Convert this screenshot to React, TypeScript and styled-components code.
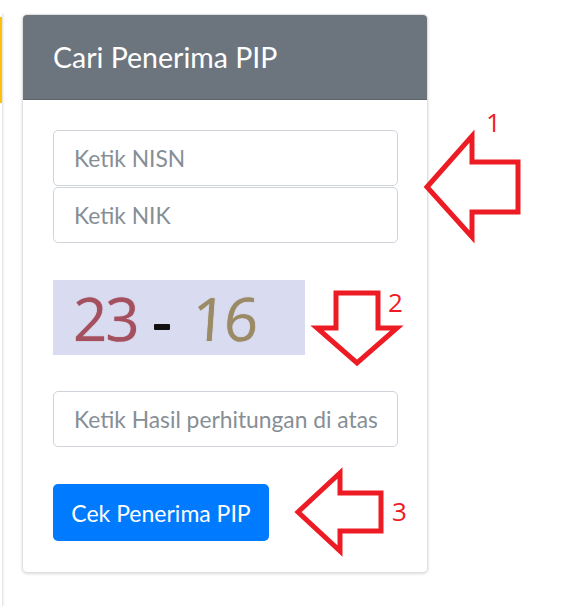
import React from 'react';
import styled, { createGlobalStyle } from 'styled-components';

const GlobalStyle = createGlobalStyle`
  html, body {
    margin: 0;
    padding: 0;
    background: #fff;
  }
  body {
    font-family: Lato, "Open Sans", sans-serif;
    width: 573px;
    height: 606px;
    overflow: hidden;
  }
`;

const Page = styled.div`
  position: relative;
  display: flex;
  align-items: flex-start;
  padding-top: 14px;
  height: 592px;
`;

const SideStub = styled.div`
  width: 2px;
  height: 620px;
  display: flex;
  flex-direction: column;
  border-right: 1px solid #e6e6e6;
  box-shadow: 1px 0 2px rgba(0, 0, 0, 0.06);
`;

const StubHeader = styled.div`
  height: 86px;
  margin-top: 3px;
  background: #ffc107;
`;

const Card = styled.div`
  margin-left: 19px;
  width: 406px;
  box-sizing: border-box;
  border: 1px solid rgba(0, 0, 0, 0.12);
  border-radius: 5px;
  box-shadow: 0 1px 3px rgba(0, 0, 0, 0.14);
  overflow: hidden;
`;

const CardHeader = styled.div`
  height: 85px;
  box-sizing: border-box;
  display: flex;
  align-items: center;
  padding: 0 30px;
  background: #6c757d;
  border-bottom: 1px solid rgba(0, 0, 0, 0.12);
`;

const Title = styled.h4`
  margin: 0;
  color: #fff;
  font-weight: 400;
  font-size: 28.5px;
`;

const CardBody = styled.div`
  padding: 30px 29px 31px 30px;
  display: flex;
  flex-direction: column;
  align-items: flex-start;
`;

const Input = styled.input<{ $gap?: number }>`
  width: 345px;
  height: 56px;
  box-sizing: border-box;
  margin: 0 0 ${(p) => p.$gap ?? 0}px 0;
  padding: 0 20px;
  border: 1px solid #ced4da;
  border-radius: 5px;
  font-family: inherit;
  font-size: 22.8px;
  color: #495057;
  background: #fff;
  outline: none;

  &::placeholder {
    color: #868e96;
  }
`;

const Captcha = styled.div`
  width: 252px;
  height: 75px;
  margin-bottom: 36px;
  box-sizing: border-box;
  padding-left: 20px;
  display: flex;
  align-items: center;
  background: #d9dcf0;
  font-family: "Open Sans", sans-serif;
  font-size: 60px;
  line-height: 1;
`;

const Digits = styled.span<{ $color: string; $skew?: number }>`
  color: ${(p) => p.$color};
  display: inline-block;
  transform: skewX(${(p) => p.$skew ?? 0}deg);
  text-shadow: 0 0 1px ${(p) => p.$color};
  letter-spacing: -2px;
`;

const Minus = styled.span`
  display: inline-block;
  width: 16px;
  height: 6px;
  margin: 18px 22px 0 16px;
  background: #111;
  border-radius: 1px;
`;

const Button = styled.button`
  width: 216px;
  height: 57px;
  border: none;
  border-radius: 5px;
  background: #007bff;
  color: #fff;
  font-family: inherit;
  font-size: 23px;
  cursor: pointer;
`;

const Overlay = styled.svg`
  position: absolute;
  left: 0;
  top: 0;
  width: 573px;
  height: 606px;
  pointer-events: none;
`;

const arrowStyle = {
  fill: 'none',
  stroke: '#ed1c24',
  strokeWidth: 5,
  strokeLinejoin: 'miter' as const,
};

const labels = [
  { n: '1', x: 486, y: 132 },
  { n: '2', x: 388, y: 312 },
  { n: '3', x: 392, y: 521 },
];

const App: React.FC = () => {
  return (
    <>
      <GlobalStyle />
      <Page>
        <SideStub>
          <StubHeader />
        </SideStub>
        <Card>
          <CardHeader>
            <Title>Cari Penerima PIP</Title>
          </CardHeader>
          <CardBody>
            <Input placeholder="Ketik NISN" $gap={1} />
            <Input placeholder="Ketik NIK" $gap={37} />
            <Captcha>
              <Digits $color="#a5505e">23</Digits>
              <Minus />
              <Digits $color="#9b8a66" $skew={-4}>16</Digits>
            </Captcha>
            <Input placeholder="Ketik Hasil perhitungan di atas" $gap={37} />
            <Button>Cek Penerima PIP</Button>
          </CardBody>
        </Card>
        <Overlay viewBox="0 0 573 606">
          <polygon
            points="427,187 472,136 472,162 518,162 518,212 472,212 472,237"
            style={arrowStyle}
          />
          <polygon
            points="336,293 378,293 378,328 397,328 357,363 317,328 336,328"
            style={arrowStyle}
          />
          <polygon
            points="298,512 340,473 340,493 381,493 381,531 340,531 340,551"
            style={arrowStyle}
          />
          {labels.map((l) => (
            <text
              key={l.n}
              x={l.x}
              y={l.y}
              fill="#ed1c24"
              fontFamily="'Open Sans', sans-serif"
              fontSize="26"
            >
              {l.n}
            </text>
          ))}
        </Overlay>
      </Page>
    </>
  );
};

export default App;
